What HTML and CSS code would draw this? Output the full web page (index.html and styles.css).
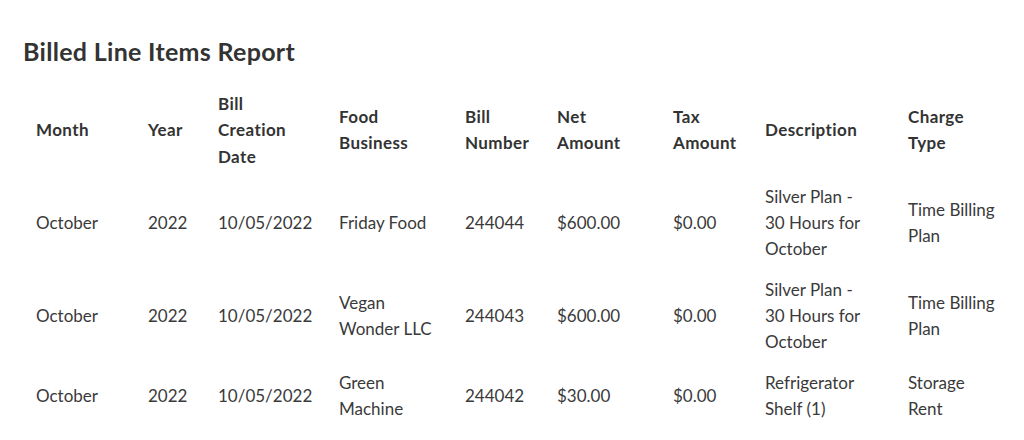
FILE: index.html
```html
<!DOCTYPE html>
<html lang="en">
<head>
<meta charset="utf-8">
<title>Billed Line Items Report</title>
<link rel="stylesheet" href="styles.css">
</head>
<body>
<main class="report">
  <h2 class="report-title">Billed Line Items Report</h2>
  <table class="report-table">
    <colgroup>
      <col class="c-month"><col class="c-year"><col class="c-date"><col class="c-biz"><col class="c-num">
      <col class="c-net"><col class="c-tax"><col class="c-desc"><col class="c-type">
    </colgroup>
    <thead>
      <tr>
        <th>Month</th>
        <th>Year</th>
        <th>Bill<br>Creation<br>Date</th>
        <th>Food<br>Business</th>
        <th>Bill<br>Number</th>
        <th>Net<br>Amount</th>
        <th>Tax<br>Amount</th>
        <th>Description</th>
        <th>Charge<br>Type</th>
      </tr>
    </thead>
    <tbody>
      <tr>
        <td>October</td>
        <td>2022</td>
        <td>10/05/2022</td>
        <td>Friday Food</td>
        <td>244044</td>
        <td>$600.00</td>
        <td>$0.00</td>
        <td>Silver Plan -<br>30 Hours for<br>October</td>
        <td>Time Billing<br>Plan</td>
      </tr>
      <tr>
        <td>October</td>
        <td>2022</td>
        <td>10/05/2022</td>
        <td>Vegan<br>Wonder LLC</td>
        <td>244043</td>
        <td>$600.00</td>
        <td>$0.00</td>
        <td>Silver Plan -<br>30 Hours for<br>October</td>
        <td>Time Billing<br>Plan</td>
      </tr>
      <tr>
        <td>October</td>
        <td>2022</td>
        <td>10/05/2022</td>
        <td>Green<br>Machine</td>
        <td>244042</td>
        <td>$30.00</td>
        <td>$0.00</td>
        <td>Refrigerator<br>Shelf (1)</td>
        <td>Storage<br>Rent</td>
      </tr>
    </tbody>
  </table>
</main>
</body>
</html>
```
FILE: styles.css
```css
html, body {
  margin: 0;
  padding: 0;
  background: #ffffff;
}

body {
  font-family: "Lato", "Open Sans", "Noto Sans", sans-serif;
  color: #363636;
  font-size: 17px;
}

.report {
  padding: 0 8px 0 24px;
}

.report-title {
  margin: 35px 0 17px -1px;
  font-size: 25px;
  line-height: 32px;
  font-weight: 700;
  letter-spacing: 0.3px;
  color: #333333;
}

.report-table {
  border-collapse: collapse;
  table-layout: fixed;
  width: 992px;
}

.c-month { width: 112px; }
.c-year { width: 70px; }
.c-date { width: 121px; }
.c-biz { width: 126px; }
.c-num { width: 92px; }
.c-net { width: 116px; }
.c-tax { width: 92px; }
.c-desc { width: 143px; }
.c-type { width: 120px; }

.report-table th,
.report-table td {
  text-align: left;
  vertical-align: middle;
  padding: 7px 12px;
  line-height: 26.3px;
  white-space: nowrap;
}

.report-table th {
  font-weight: 700;
  letter-spacing: 0.4px;
  color: #333333;
}

.report-table td {
  font-weight: 400;
  color: #3a3a3a;
}
```
